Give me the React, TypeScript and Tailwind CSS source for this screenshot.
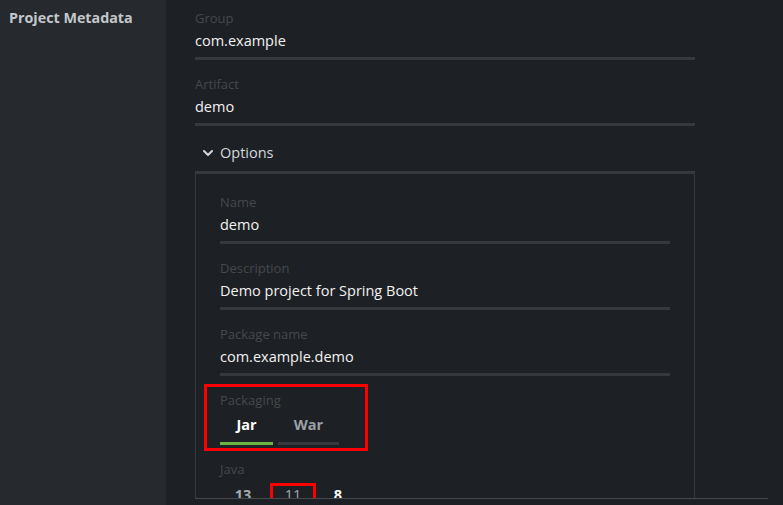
import { ChevronDown } from "lucide-react"

const font = { fontFamily: '"Open Sans", "Liberation Sans", sans-serif' }

function Field({ label, value }: { label: string; value: string }) {
  return (
    <div className="mb-[14px]">
      <div className="h-[20px] leading-[20px] text-[13px] text-[#45494e]">{label}</div>
      <div className="mt-[2px] h-[22px] leading-[22px] text-[14.5px] text-[#f2f2f2]">{value}</div>
      <div className="mt-[5px] h-[3px] bg-[#35383c]" />
    </div>
  )
}

export default function App() {
  return (
    <div className="w-[783px] h-[505px] flex overflow-hidden bg-[#1d2024]" style={font}>
      <aside className="w-[166px] shrink-0 bg-[#26292d] pt-[8px] pl-[9px]">
        <h2 className="text-[14.3px] leading-[20px] font-bold text-[#c3c7cb]">Project Metadata</h2>
      </aside>

      <main className="flex-1 relative">
        <div className="w-[500px] ml-[29px] pt-[8px]">
          <Field label="Group" value="com.example" />
          <Field label="Artifact" value="demo" />

          <button className="h-[26px] flex items-center gap-[4px] pl-[5px] mb-[5px] text-[14.5px] text-[#d3d8de]">
            <ChevronDown className="w-[16px] h-[16px]" strokeWidth={3} />
            Options
          </button>

          <div className="border-t-[3px] border-x border-[#35383c] h-[400px] pt-[18px] px-[24px]">
            <Field label="Name" value="demo" />
            <Field label="Description" value="Demo project for Spring Boot" />
            <Field label="Package name" value="com.example.demo" />

            <div className="relative mb-[14px]">
              <div className="h-[20px] leading-[20px] text-[13px] text-[#45494e]">Packaging</div>
              <div className="mt-[4px] flex gap-[5px]">
                <div className="w-[53px]">
                  <div className="h-[22px] leading-[22px] text-center text-[14.5px] font-bold text-white">Jar</div>
                  <div className="mt-[6px] h-[3px] bg-[#6db33f]" />
                </div>
                <div className="w-[61px]">
                  <div className="h-[22px] leading-[22px] text-center text-[14.5px] font-bold text-[#9ba1a7]">War</div>
                  <div className="mt-[6px] h-[3px] bg-[#36393d]" />
                </div>
              </div>
              <div className="absolute left-[-16px] top-[-6px] w-[164px] h-[67px] border-[3px] border-[#ff0000]" />
            </div>

            <div>
              <div className="h-[20px] leading-[20px] text-[13px] text-[#45494e]">Java</div>
              <div className="mt-[4px] flex">
                <div className="w-[46px] h-[24px] leading-[24px] text-center text-[14.5px] font-bold text-[#a3a8ad]">13</div>
                <div className="relative ml-[4px] w-[46px] h-[24px] leading-[24px] text-center text-[14.5px] text-[#a3a8ad]">
                  11
                  <div className="absolute inset-0 border-[3px] border-[#ff0000]" />
                </div>
                <div className="w-[44px] h-[24px] leading-[24px] text-center text-[14.5px] font-bold text-white">8</div>
              </div>
            </div>
          </div>
        </div>

        <div className="absolute left-[29px] top-[498px] w-[573px] h-[1px] bg-[#45484c]" />
        <div className="absolute left-[29px] top-[499px] w-[573px] h-[6px] bg-[#1d2024]" />
      </main>
    </div>
  )
}
